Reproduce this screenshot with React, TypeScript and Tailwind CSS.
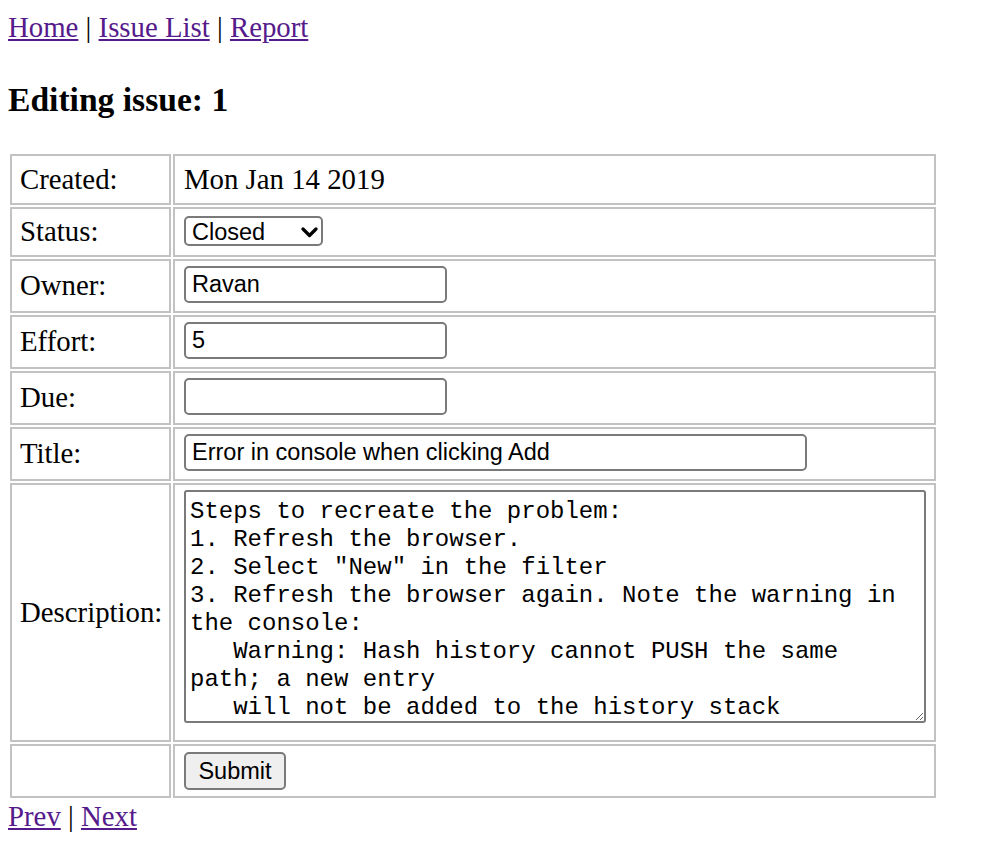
import React from "react";

const inputCls =
  "block h-[37px] border-2 border-[#7a7a7a] rounded-[5px] bg-white px-[6px] text-[23.5px] text-black font-['Liberation_Sans',Arial,sans-serif] outline-none";

function LabelCell({ children }: { children?: React.ReactNode }) {
  return (
    <td className="w-[161px] border-2 border-[#c2c2c2] pl-[8px] pr-[4px] align-middle whitespace-nowrap">
      {children}
    </td>
  );
}

export default function App() {
  const desc =
    'Steps to recreate the problem:\n1. Refresh the browser.\n2. Select "New" in the filter\n3. Refresh the browser again. Note the warning in\nthe console:\n   Warning: Hash history cannot PUSH the same\npath; a new entry\n   will not be added to the history stack';
  return (
    <div className="min-h-[866px] bg-white px-[8px] pt-[11px] text-black font-['Liberation_Serif','Times_New_Roman',serif] text-[28.8px]">
      <div className="leading-[32px]">
        <a href="#" className="underline text-[#551a8b]">Home</a> | <a href="#" className="underline text-[#551a8b]">Issue List</a> | <a href="#" className="underline text-[#551a8b]">Report</a>
      </div>
      <h3 className="mt-[38px] text-[33.6px] font-bold leading-[38px]">Editing issue: 1</h3>
      <table className="mt-[33px] w-[930px] border-separate border-spacing-[2px]">
        <tbody>
          <tr className="h-[51px]">
            <LabelCell>Created:</LabelCell>
            <td className="border-2 border-[#c2c2c2] pl-[9px] align-middle">Mon Jan 14 2019</td>
          </tr>
          <tr className="h-[50px]">
            <LabelCell>Status:</LabelCell>
            <td className="border-2 border-[#c2c2c2] pl-[9px] pt-[7px] align-top">
              <div className="relative h-[30px] w-[139px] rounded-[5px] border-2 border-[#7a7a7a] bg-white font-['Liberation_Sans',Arial,sans-serif] text-[23.5px] leading-[26px]">
                <span className="absolute left-[6px] top-[1px]">Closed</span>
                <svg className="absolute left-[115px] top-[9px]" width="17" height="11" viewBox="0 0 17 11">
                  <path d="M2 2 L8.5 8.5 L15 2" fill="none" stroke="#000" strokeWidth="3.2" strokeLinecap="round" strokeLinejoin="round" />
                </svg>
              </div>
            </td>
          </tr>
          <tr className="h-[54px]">
            <LabelCell>Owner:</LabelCell>
            <td className="border-2 border-[#c2c2c2] pl-[9px] pt-[5px] align-top">
              <input className={inputCls + " w-[263px]"} defaultValue="Ravan" />
            </td>
          </tr>
          <tr className="h-[54px]">
            <LabelCell>Effort:</LabelCell>
            <td className="border-2 border-[#c2c2c2] pl-[9px] pt-[5px] align-top">
              <input className={inputCls + " w-[263px]"} defaultValue="5" />
            </td>
          </tr>
          <tr className="h-[54px]">
            <LabelCell>Due:</LabelCell>
            <td className="border-2 border-[#c2c2c2] pl-[9px] pt-[5px] align-top">
              <input className={inputCls + " w-[263px]"} defaultValue="" />
            </td>
          </tr>
          <tr className="h-[54px]">
            <LabelCell>Title:</LabelCell>
            <td className="border-2 border-[#c2c2c2] pl-[9px] pt-[5px] align-top">
              <input className={inputCls + " w-[623px]"} defaultValue="Error in console when clicking Add" />
            </td>
          </tr>
          <tr className="h-[259px]">
            <LabelCell>Description:</LabelCell>
            <td className="border-2 border-[#c2c2c2] pl-[9px] pt-[5px] align-top">
              <textarea
                wrap="off"
                className="block h-[233px] w-[742px] overflow-hidden rounded-[3px] border-2 border-[#7a7a7a] bg-white px-[4px] pt-[6px] font-['Liberation_Mono','Courier_New',monospace] text-[24px] leading-[28px] text-black outline-none"
                defaultValue={desc}
              />
            </td>
          </tr>
          <tr className="h-[54px]">
            <LabelCell></LabelCell>
            <td className="border-2 border-[#c2c2c2] pl-[9px] pt-[6px] align-top">
              <button className="block h-[38px] w-[102px] rounded-[5px] border-2 border-[#7a7a7a] bg-[#efefef] font-['Liberation_Sans',Arial,sans-serif] text-[23.5px] text-black">
                Submit
              </button>
            </td>
          </tr>
        </tbody>
      </table>
      <div className="leading-[32px]">
        <a href="#" className="underline text-[#551a8b]">Prev</a> | <a href="#" className="underline text-[#551a8b]">Next</a>
      </div>
    </div>
  );
}
